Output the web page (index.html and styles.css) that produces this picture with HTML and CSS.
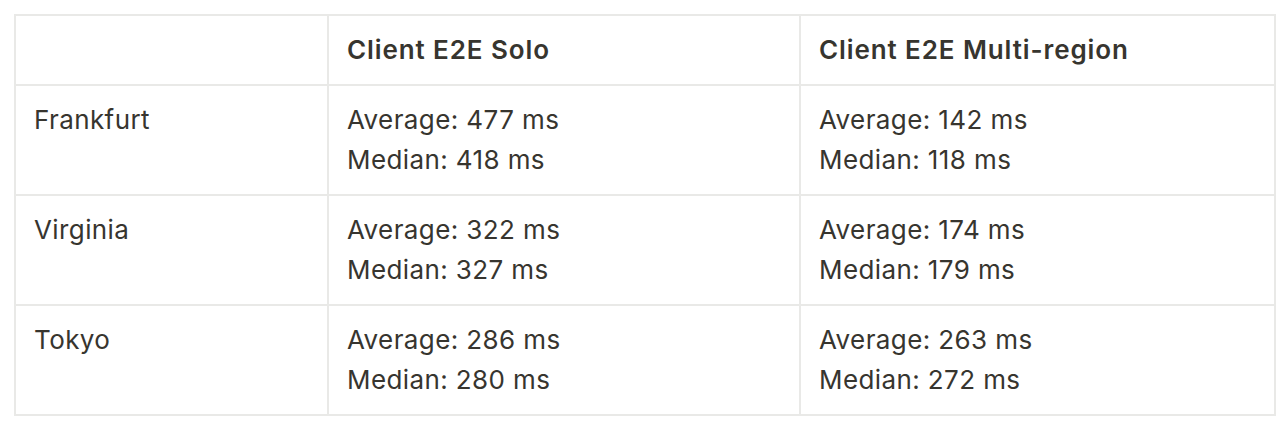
FILE: index.html
```html
<!DOCTYPE html>
<html>
<head>
<meta charset="utf-8">
<link rel="stylesheet" href="styles.css">
</head>
<body>
<table class="tbl">
  <colgroup>
    <col class="c1"><col class="c2"><col class="c3">
  </colgroup>
  <thead>
    <tr><th></th><th>Client E2E Solo</th><th>Client E2E Multi-region</th></tr>
  </thead>
  <tbody>
    <tr><td>Frankfurt</td><td>Average: 477 ms<br>Median: 418 ms</td><td>Average: 142 ms<br>Median: 118 ms</td></tr>
    <tr><td>Virginia</td><td>Average: 322 ms<br>Median: 327 ms</td><td>Average: 174 ms<br>Median: 179 ms</td></tr>
    <tr><td>Tokyo</td><td>Average: 286 ms<br>Median: 280 ms</td><td>Average: 263 ms<br>Median: 272 ms</td></tr>
  </tbody>
</table>
</body>
</html>
```
FILE: styles.css
```css
html, body { margin: 0; background: #fff; }
body { padding: 14px; }
.tbl {
  border-collapse: collapse;
  width: 1260px;
  table-layout: fixed;
  font-family: Inter, "Noto Sans", sans-serif;
  font-size: 26px;
  letter-spacing: 0.4px;
  line-height: 40px;
  color: #37352f;
}
.c1 { width: 313px; }
.c2 { width: 472px; }
.c3 { width: 475px; }
.tbl th, .tbl td {
  border: 2px solid #e9e9e7;
  text-align: left;
  vertical-align: top;
  padding: 14px 18px;
}
.tbl th { font-weight: 600; letter-spacing: 0.9px; }
.tbl td:first-child { padding-left: 18px; }
```
